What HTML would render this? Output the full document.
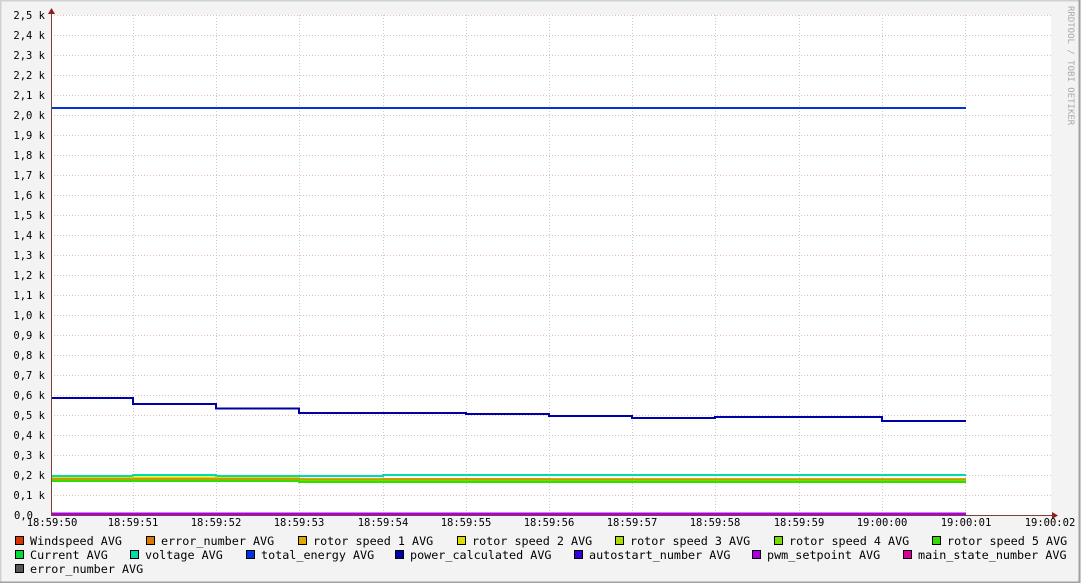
<!DOCTYPE html>
<html><head><meta charset="utf-8"><style>
html,body{margin:0;padding:0;background:#f3f3f3}
svg{display:block}
text{font-family:"DejaVu Sans Mono","Liberation Mono",monospace;font-size:10.5px;fill:#000}
text.leg{font-size:11.75px}
</style></head><body>
<svg width="1081" height="583" xmlns="http://www.w3.org/2000/svg">
<rect x="0" y="0" width="1081" height="583" fill="#f3f3f3"/>
<path d="M0.5 582V0.5H1080" stroke="#d0d0d0" stroke-width="2" fill="none"/>
<path d="M1079.5 0V582.5H0" stroke="#a0a0a0" stroke-width="2" fill="none"/>
<rect x="51" y="15" width="1000" height="500" fill="#fff"/>
<g stroke="#e4bcbc" stroke-width="1" stroke-dasharray="1,2">
<path d="M51 15.5H1051M51 35.5H1051M51 55.5H1051M51 75.5H1051M51 95.5H1051M51 115.5H1051M51 135.5H1051M51 155.5H1051M51 175.5H1051M51 195.5H1051M51 215.5H1051M51 235.5H1051M51 255.5H1051M51 275.5H1051M51 295.5H1051M51 315.5H1051M51 335.5H1051M51 355.5H1051M51 375.5H1051M51 395.5H1051M51 415.5H1051M51 435.5H1051M51 455.5H1051M51 475.5H1051M51 495.5H1051"/>
</g>
<g stroke="#cccccc" stroke-width="1" stroke-dasharray="1,2">
<path d="M133.5 15V515M216.5 15V515M299.5 15V515M383.5 15V515M466.5 15V515M549.5 15V515M632.5 15V515M715.5 15V515M799.5 15V515M882.5 15V515M965.5 15V515"/>
</g>
<g fill="none" stroke-width="2">
<path d="M51 108H966" stroke="#0033dd"/>
<path d="M51 398H133V404H216V408.5H299V413H466V414H549V416H632V418H715V417H882V421H966" stroke="#0000aa"/>
<path d="M51 476H133V475H216V476H383V475H966" stroke="#00ddaa"/>
<path d="M51 478H133V477.5H216V478H299V479H966" stroke="#dddd00"/>
<path d="M51 479H299V480H383V479H549V480H966" stroke="#ddaa00"/>
<path d="M51 480H966" stroke="#77dd00"/>
<path d="M51 481H299V482H966" stroke="#33dd00"/>
<path d="M51 479H966" stroke="#dd7700" opacity="0.5"/>
<path d="M51 514H966" stroke="#aa00dd" stroke-width="3"/>
</g>
<path d="M51.5 11V515.5H1055" stroke="#7a4040" stroke-width="1" fill="none"/>
<path d="M48 14L51.5 8L55 14Z" fill="#902020"/>
<path d="M1052 512L1058 515.5L1052 519Z" fill="#902020"/>
<g text-anchor="end">
<text x="45" y="19">2,5 k</text><text x="45" y="39">2,4 k</text><text x="45" y="59">2,3 k</text><text x="45" y="79">2,2 k</text><text x="45" y="99">2,1 k</text><text x="45" y="119">2,0 k</text><text x="45" y="139">1,9 k</text><text x="45" y="159">1,8 k</text><text x="45" y="179">1,7 k</text><text x="45" y="199">1,6 k</text><text x="45" y="219">1,5 k</text><text x="45" y="239">1,4 k</text><text x="45" y="259">1,3 k</text><text x="45" y="279">1,2 k</text><text x="45" y="299">1,1 k</text><text x="45" y="319">1,0 k</text><text x="45" y="339">0,9 k</text><text x="45" y="359">0,8 k</text><text x="45" y="379">0,7 k</text><text x="45" y="399">0,6 k</text><text x="45" y="419">0,5 k</text><text x="45" y="439">0,4 k</text><text x="45" y="459">0,3 k</text><text x="45" y="479">0,2 k</text><text x="45" y="499">0,1 k</text><text x="33" y="519">0,0</text>
</g>
<g text-anchor="middle">
<text x="52" y="526">18:59:50</text><text x="133" y="526">18:59:51</text><text x="216" y="526">18:59:52</text><text x="299" y="526">18:59:53</text><text x="383" y="526">18:59:54</text><text x="466" y="526">18:59:55</text><text x="549" y="526">18:59:56</text><text x="632" y="526">18:59:57</text><text x="715" y="526">18:59:58</text><text x="799" y="526">18:59:59</text><text x="882" y="526">19:00:00</text><text x="966" y="526">19:00:01</text><text x="1050" y="526">19:00:02</text>
</g>
<text x="1068" y="6" transform="rotate(90 1068 6)" style="font-size:9px;fill:#aaa">RRDTOOL / TOBI OETIKER</text>
<g stroke="#000" stroke-width="1">
<rect x="15.5" y="536.5" width="8" height="8" fill="#dd3300"/><rect x="146.5" y="536.5" width="8" height="8" fill="#dd7700"/><rect x="298.5" y="536.5" width="8" height="8" fill="#ddaa00"/><rect x="457.5" y="536.5" width="8" height="8" fill="#dddd00"/><rect x="615.5" y="536.5" width="8" height="8" fill="#aadd00"/><rect x="774.5" y="536.5" width="8" height="8" fill="#77dd00"/><rect x="932.5" y="536.5" width="8" height="8" fill="#33dd00"/>
<rect x="15.5" y="550.5" width="8" height="8" fill="#00dd33"/><rect x="130.5" y="550.5" width="8" height="8" fill="#00ddaa"/><rect x="246.5" y="550.5" width="8" height="8" fill="#0033dd"/><rect x="395.5" y="550.5" width="8" height="8" fill="#0000aa"/><rect x="574.5" y="550.5" width="8" height="8" fill="#3300dd"/><rect x="752.5" y="550.5" width="8" height="8" fill="#aa00dd"/><rect x="903.5" y="550.5" width="8" height="8" fill="#dd0099"/>
<rect x="15.5" y="564.5" width="8" height="8" fill="#555555"/>
</g>
<g>
<text class="leg" x="30" y="545">Windspeed AVG</text><text class="leg" x="161" y="545">error_number AVG</text><text class="leg" x="313" y="545">rotor speed 1 AVG</text><text class="leg" x="472" y="545">rotor speed 2 AVG</text><text class="leg" x="630" y="545">rotor speed 3 AVG</text><text class="leg" x="789" y="545">rotor speed 4 AVG</text><text class="leg" x="947" y="545">rotor speed 5 AVG</text>
<text class="leg" x="30" y="559">Current AVG</text><text class="leg" x="145" y="559">voltage AVG</text><text class="leg" x="261" y="559">total_energy AVG</text><text class="leg" x="410" y="559">power_calculated AVG</text><text class="leg" x="589" y="559">autostart_number AVG</text><text class="leg" x="767" y="559">pwm_setpoint AVG</text><text class="leg" x="918" y="559">main_state_number AVG</text>
<text class="leg" x="30" y="573">error_number AVG</text>
</g>
</svg>
</body></html>
